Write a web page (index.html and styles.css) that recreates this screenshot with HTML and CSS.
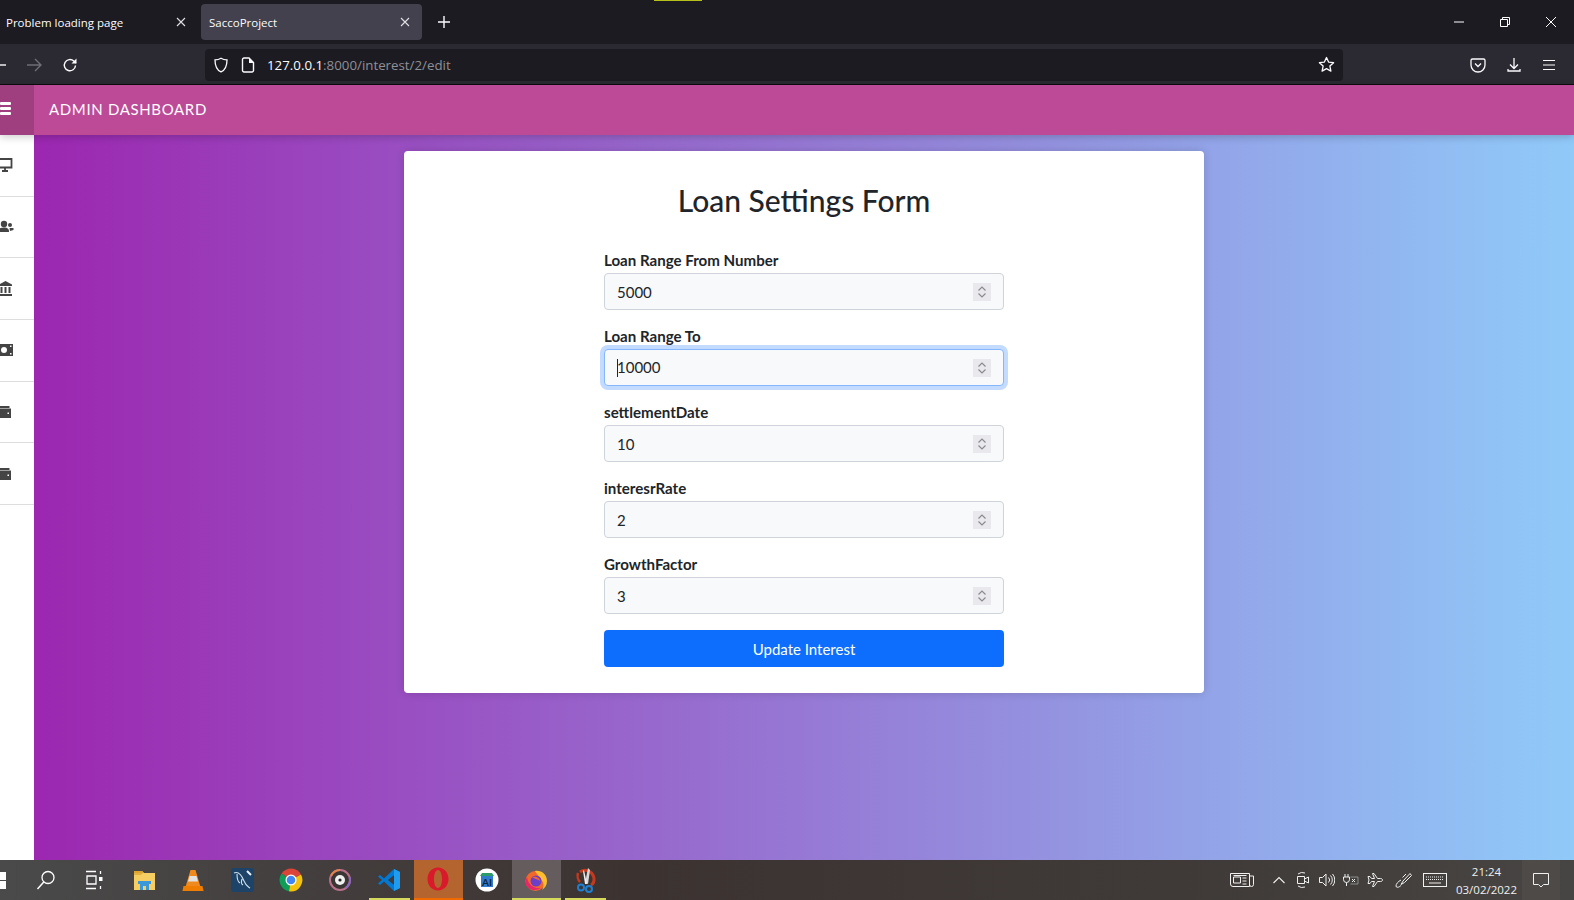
FILE: index.html
```html
<!DOCTYPE html>
<html lang="en">
<head>
  <meta charset="UTF-8" />
  <title>SaccoProject</title>
  <link rel="stylesheet" href="styles.css">
</head>
<body>
  <div class="tabstrip">
    <div class="sync-mark"></div>
    <div class="tab"><span class="tab-title">Problem loading page</span><svg width="10" height="10" viewBox="0 0 10 10"><path d="M1 1l8 8M9 1L1 9" stroke="#e0e0e6" stroke-width="1.1"/></svg></div>
    <div class="tab tab-active"><span class="tab-title">SaccoProject</span><svg width="10" height="10" viewBox="0 0 10 10"><path d="M1 1l8 8M9 1L1 9" stroke="#e0e0e6" stroke-width="1.1"/></svg></div>
    <svg class="new-tab" width="14" height="14" viewBox="0 0 14 14"><path d="M7 1v12M1 7h12" stroke="#fbfbfe" stroke-width="1.4"/></svg>
    <div class="win-btns">
      <svg width="12" height="12" viewBox="0 0 12 12"><path d="M1 6h10" stroke="#fff"/></svg>
      <svg width="12" height="12" viewBox="0 0 12 12"><path d="M1.500 3.500h7v7h-7zM3.500 3.500v-2h7v7h-2" fill="none" stroke="#fff"/></svg>
      <svg width="12" height="12" viewBox="0 0 12 12"><path d="M1 1l10 10M11 1L1 11" stroke="#fff"/></svg>
    </div>
  </div>

  <div class="toolbar">
    <div class="nav-btns">
      <svg width="6" height="16" viewBox="0 0 6 16"><path d="M0 8h6" stroke="#fbfbfe" stroke-width="1.4"/></svg>
      <svg width="16" height="16" viewBox="0 0 16 16"><path d="M1 8h14M9 2l6 6-6 6" fill="none" stroke="#6f6e76" stroke-width="1.4"/></svg>
      <svg width="16" height="16" viewBox="0 0 16 16"><path d="M13.500 8.500a5.600 5.600 0 1 1-1.700-4.400L14 6" fill="none" stroke="#fbfbfe" stroke-width="1.4"/><path d="M14.500 1.500v5h-5z" fill="#fbfbfe"/></svg>
    </div>
    <div class="urlbar">
      <svg width="16" height="16" viewBox="0 0 16 16"><path d="M8 1.200c2 1.200 4 1.600 6 1.700 0 6-1.600 10-6 12-4.400-2-6-6-6-12 2-.1 4-.5 6-1.700z" fill="none" stroke="#fbfbfe" stroke-width="1.300"/></svg>
      <svg width="14" height="16" viewBox="0 0 14 16"><path d="M2.500 1H8l4.500 4.500v8a1.500 1.500 0 0 1-1.500 1.500H3a1.500 1.500 0 0 1-1.500-1.500V2.500A1.500 1.500 0 0 1 3 1z" fill="none" stroke="#fbfbfe" stroke-width="1.400"/><path d="M8 1v5h5z" fill="#fbfbfe"/></svg>
      <span class="url"><span class="url-host">127.0.0.1</span>:8000/interest/2/edit</span>
      <svg class="star" width="17" height="17" viewBox="0 0 17 17"><path d="M8.500 1.500l2.100 4.600 5 .6-3.700 3.400 1 5-4.400-2.500-4.400 2.500 1-5L1.400 6.700l5-.6z" fill="none" stroke="#fbfbfe" stroke-width="1.300" stroke-linejoin="round"/></svg>
    </div>
    <div class="tool-btns">
      <svg width="16" height="16" viewBox="0 0 16 16"><path d="M2.500 2h11A1.500 1.500 0 0 1 15 3.500V8a7 7 0 0 1-14 0V3.500A1.500 1.500 0 0 1 2.500 2z" fill="none" stroke="#fbfbfe" stroke-width="1.300"/><path d="M5 6.500l3 3 3-3" fill="none" stroke="#fbfbfe" stroke-width="1.300"/></svg>
      <svg width="16" height="16" viewBox="0 0 16 16"><path d="M8 1v10M4 7.500L8 11.500l4-4M2 12v2h12v-2" fill="none" stroke="#fbfbfe" stroke-width="1.300"/></svg>
      <svg width="14" height="14" viewBox="0 0 14 14"><path d="M1 2.500h12M1 7h12M1 11.500h12" stroke="#fbfbfe" stroke-width="1.200"/></svg>
    </div>
  </div>

  <div class="page">
    <header class="topbar">
      <div class="menu-toggle"><span></span><span></span><span></span></div>
      <div class="brand">ADMIN DASHBOARD</div>
    </header>
    <div class="page-body">
      <nav class="sidebar">
        <a class="side-item">
          <svg width="14" height="16" viewBox="0 0 14 16"><path d="M-1 2h12.500v8.500H-1zM2 14h6M5 10.500V14" fill="none" stroke="#444" stroke-width="1.800"/></svg>
        </a>
        <a class="side-item">
          <svg width="14" height="16" viewBox="0 0 14 16"><circle cx="4" cy="5" r="3.200" fill="#444"/><path d="M-2 13c0-3 2-4.500 6-4.500s5 1.500 5 4.500z" fill="#444"/><circle cx="10" cy="6" r="2" fill="#444"/><path d="M9.500 9h4v2l-3.500 1z" fill="#444"/></svg>
        </a>
        <a class="side-item">
          <svg width="14" height="16" viewBox="0 0 14 16"><path d="M5.500 0l6.500 3.500V5H-1V3.500z" fill="#444"/><path d="M.5 6h2v6h-2zM4.500 6h2v6h-2zM8.500 6h2v6h-2zM-1 13h13v2H-1z" fill="#444"/></svg>
        </a>
        <a class="side-item">
          <svg width="14" height="16" viewBox="0 0 14 16"><path d="M0 2h13V14H0z" fill="#444"/><circle cx="4" cy="8" r="3" fill="#fff"/><rect x="10" y="3.500" width="1.500" height="1.500" fill="#fff"/><rect x="10" y="11" width="1.500" height="1.500" fill="#fff"/></svg>
        </a>
        <a class="side-item">
          <svg width="14" height="16" viewBox="0 0 14 16"><path d="M0 2h9.500v2H0z" fill="#444"/><path d="M0 4.500h11v9.500H0z" fill="#444"/><rect x="7.500" y="8.500" width="1.500" height="1.500" fill="#fff"/></svg>
        </a>
        <a class="side-item">
          <svg width="14" height="16" viewBox="0 0 14 16"><path d="M0 2h9.500v2H0z" fill="#444"/><path d="M0 4.500h11v9.500H0z" fill="#444"/><rect x="7.500" y="8.500" width="1.500" height="1.500" fill="#fff"/></svg>
        </a>
      </nav>
      <main class="content">
        <section class="card">
          <h1 class="card-title">Loan Settings Form</h1>
          <form class="loan-form">
            <div class="field">
              <label>Loan Range From Number</label>
              <div class="num-input"><span>5000</span><i class="spin"><svg width="10" height="16" viewBox="0 0 10 16"><path d="M1.500 6.500L5 3l3.500 3.500M1.500 9.500L5 13l3.500-3.500" fill="none" stroke="#8a8a8f" stroke-width="1.200"/></svg></i></div>
            </div>
            <div class="field">
              <label>Loan Range To</label>
              <div class="num-input focused"><span><b class="caret"></b>10000</span><i class="spin"><svg width="10" height="16" viewBox="0 0 10 16"><path d="M1.500 6.500L5 3l3.500 3.500M1.500 9.500L5 13l3.500-3.500" fill="none" stroke="#8a8a8f" stroke-width="1.200"/></svg></i></div>
            </div>
            <div class="field">
              <label>settlementDate</label>
              <div class="num-input"><span>10</span><i class="spin"><svg width="10" height="16" viewBox="0 0 10 16"><path d="M1.500 6.500L5 3l3.500 3.500M1.500 9.500L5 13l3.500-3.500" fill="none" stroke="#8a8a8f" stroke-width="1.200"/></svg></i></div>
            </div>
            <div class="field">
              <label>interesrRate</label>
              <div class="num-input"><span>2</span><i class="spin"><svg width="10" height="16" viewBox="0 0 10 16"><path d="M1.500 6.500L5 3l3.500 3.500M1.500 9.500L5 13l3.500-3.500" fill="none" stroke="#8a8a8f" stroke-width="1.200"/></svg></i></div>
            </div>
            <div class="field">
              <label>GrowthFactor</label>
              <div class="num-input"><span>3</span><i class="spin"><svg width="10" height="16" viewBox="0 0 10 16"><path d="M1.500 6.500L5 3l3.500 3.500M1.500 9.500L5 13l3.500-3.500" fill="none" stroke="#8a8a8f" stroke-width="1.200"/></svg></i></div>
            </div>
            <button class="submit" type="button">Update Interest</button>
          </form>
        </section>
      </main>
    </div>
  </div>

  <footer class="taskbar">
    <div class="start"><span></span><span></span></div>
    <!-- search -->
    <span class="task-slot"><svg width="22" height="22" viewBox="0 0 22 22"><circle cx="13" cy="8.500" r="6" fill="none" stroke="#fff" stroke-width="1.300"/><path d="M8.800 13L2.500 20" stroke="#fff" stroke-width="1.500"/></svg></span>
    <!-- task view -->
    <span class="task-slot"><svg width="22" height="22" viewBox="0 0 22 22"><path d="M2 2.500h10M2 19.500h10M3 7h9v8H3zM16.500 2v3M16.500 17v3" fill="none" stroke="#fff" stroke-width="1.300"/><rect x="15" y="8" width="3.500" height="4" fill="#fff"/></svg></span>
    <!-- folder -->
    <span class="task-slot"><svg width="24" height="22" viewBox="0 0 24 22"><path d="M2 2h8l2 2h11v17H2z" fill="#f5cf62"/><path d="M2 2h8l2 2H2z" fill="#dca530"/><path d="M2 4h9l-2 2H2z" fill="#e3b23f"/><path d="M8 12h9v9h-3v-4h-3v4H8z" fill="#3a97d8"/><path d="M6 12h13v3H6z" fill="#3a97d8"/></svg></span>
    <!-- vlc -->
    <span class="task-slot"><svg width="24" height="24" viewBox="0 0 24 24"><path d="M9.500 2h5l5 17h-15z" fill="#f08a1c"/><path d="M8.500 8h7l1.500 5.500H7z" fill="#e2e2e2"/><path d="M2.500 18h19l1 5h-21z" fill="#ef7d00"/></svg></span>
    <!-- mysql workbench -->
    <span class="task-slot"><svg width="24" height="24" viewBox="0 0 24 24"><rect x="1" y="0" width="23" height="24" rx="3" fill="#1d4468"/><path d="M4 5c5-2 8 3 10 8s3 5 6 7M7 6c0 5 1 8 3 9M12 11c-1 3-1 5 1 6" fill="none" stroke="#cfe0ec" stroke-width="1.100"/><path d="M17 3l4 4" stroke="#e8f0f6" stroke-width="2"/></svg></span>
    <!-- chrome -->
    <span class="task-slot"><svg width="24" height="24" viewBox="0 0 24 24"><path d="M12 12L22 6.500A11.500 11.500 0 0 0 2.600 5.400z" fill="#db4437"/><path d="M12 12L2.600 5.400A11.500 11.500 0 0 0 10 23.300z" fill="#0f9d58"/><path d="M12 12l-2 11.300A11.500 11.500 0 0 0 22 6.500z" fill="#f4c20d"/><circle cx="12" cy="12" r="5.500" fill="#fff"/><circle cx="12" cy="12" r="4.300" fill="#4285f4"/></svg></span>
    <!-- groove -->
    <span class="task-slot"><svg width="24" height="24" viewBox="0 0 24 24"><circle cx="12" cy="12" r="10" fill="#3a3634" stroke="#b8708a" stroke-width="2"/><path d="M12 2a10 10 0 0 0-9 6" fill="none" stroke="#e0824a" stroke-width="2"/><path d="M21.500 9a10 10 0 0 1-4 11" fill="none" stroke="#8b66c4" stroke-width="2"/><circle cx="12" cy="12" r="5" fill="#f0f0f0"/><circle cx="12" cy="12" r="1.600" fill="#222"/></svg></span>
    <!-- vs code -->
    <span class="task-slot task-open"><svg width="24" height="24" viewBox="0 0 24 24"><path d="M17 1l6 3v16l-6 3L7 13.500 3 17l-2-1.500L5 12 1 8.500 3 7l4 3.500z" fill="#0078d4"/><path d="M17 1l6 3v16l-6 3z" fill="#1f9cf0"/><path d="M17 7v10l-6-5z" fill="#3f3a39"/></svg></span>
    <!-- opera -->
    <span class="task-slot task-opera"><svg width="24" height="26" viewBox="0 0 24 26"><path d="M12 1.500c6 0 10.500 5 10.500 11.500S18 24.500 12 24.500 1.500 19.500 1.500 13 6 1.500 12 1.500zM12 4c-2.500 0-4 4-4 9s1.500 9 4 9 4-4 4-9-1.500-9-4-9z" fill="#d81a2a" fill-rule="evenodd"/></svg></span>
    <!-- ai app -->
    <span class="task-slot"><svg width="24" height="24" viewBox="0 0 24 24"><circle cx="12" cy="12" r="11.500" fill="#fff"/><path d="M7 5h10l2 3H5z" fill="#2e9c6a"/><path d="M6 8h12v11H6z" fill="#2f7bd0"/><text class="ai-label" x="12" y="17.500" text-anchor="middle">AI</text></svg></span>
    <!-- firefox -->
    <span class="task-slot task-active"><svg width="24" height="24" viewBox="0 0 24 24"><circle cx="11.500" cy="13" r="10" fill="#f2682a"/><path d="M11 3c6-1 12 3 12 10 0 4-2 7-5 9 2-3 2-7 0-9-1-3-4-5-7-10z" fill="#ffbd2e"/><path d="M3 9c1 7 6 12 14 11-4 3-12 3-15-3-1-3 0-6 1-8z" fill="#e6286b"/><circle cx="12" cy="13" r="5.500" fill="#6b3fc9"/><path d="M8 9c4-1 8 1 8 4-3-2-5-2-8-4z" fill="#f2682a"/></svg></span>
    <!-- snip tool -->
    <span class="task-slot task-open"><svg width="24" height="26" viewBox="0 0 24 26"><path d="M6 5a9 9 0 0 1 14 8c0 2-1 4-3 5" fill="none" stroke="#c43a1e" stroke-width="3"/><path d="M4 6c-1 3 0 7 2 9" fill="none" stroke="#c43a1e" stroke-width="2.500"/><path d="M14 1l2 2-2 14-3-1z" fill="#d8d8d8"/><path d="M10 3l3 14h-2L9 4z" fill="#f0f0f0"/><circle cx="7" cy="20.500" r="3" fill="none" stroke="#1f7fd0" stroke-width="2"/><circle cx="15" cy="22" r="3" fill="none" stroke="#1f7fd0" stroke-width="2"/></svg></span>

    <div class="tray">
      <span class="tray-news"><svg width="24" height="16" viewBox="0 0 24 16"><path d="M.5 1.500h19v13H3A2.500 2.500 0 0 1 .5 12zM19.500 4h4v8.500a2 2 0 0 1-4 0" fill="none" stroke="#f0f0f0"/><path d="M3.500 5h7v6h-7zM3.500 3.500h13M12.500 6h4M12.500 9h4M12.500 12h4" fill="none" stroke="#f0f0f0"/></svg></span>
      <span class="tray-slot"><svg width="14" height="14" viewBox="0 0 14 14"><path d="M1.500 10L7 4.500 12.500 10" fill="none" stroke="#f0f0f0" stroke-width="1.100"/></svg></span>
      <span class="tray-slot"><svg width="14" height="18" viewBox="0 0 14 18"><path d="M2 3a7 7 0 0 1 7-1M9 16a7 7 0 0 1-7-1" fill="none" stroke="#f0f0f0"/><path d="M1.500 5.500h7v7h-7zM8.500 8l4-2v6l-4-2" fill="none" stroke="#f0f0f0"/></svg></span>
      <span class="tray-slot"><svg width="16" height="16" viewBox="0 0 16 16"><path d="M.5 5.500h3L7 2v12l-3.500-3.500h-3zM9.500 5.500a3.500 3.500 0 0 1 0 5M11.500 3.500a6.500 6.500 0 0 1 0 9M13.500 2a9 9 0 0 1 0 12" fill="none" stroke="#f0f0f0"/></svg></span>
      <span class="tray-slot"><svg width="16" height="14" viewBox="0 0 16 14"><path d="M2 1v3M5 1v3M.5 4h6v2.500a3 3 0 0 1-6 0zM3.500 9.500V13" fill="none" stroke="#f0f0f0"/><path d="M7.500 4h7.500v7H7.500" fill="none" stroke="#8e8e8e"/><path d="M9 6l3 3M12 6L9 9" stroke="#f0f0f0"/></svg></span>
      <span class="tray-slot"><svg width="16" height="16" viewBox="0 0 16 16"><path d="M15.500 8c0-1-1-1.500-2-1.500h-3L7 1.500H5.500L7.500 6.500h-3L3 4.500H1L2 8l-1 3.500h2l1.500-2h3l-2 5H7l3.500-5h3c1 0 2-.5 2-1.500z" fill="none" stroke="#f0f0f0"/></svg></span>
      <span class="tray-pen"><svg width="17" height="17" viewBox="0 0 17 17"><path d="M15 1.500L8 9 6 12.500l3.500-2 7-7zM11 2L7.500 5.500M6 8c-3 1.500-5 4-5 6 0 2 3 1.500 5-.5" fill="none" stroke="#f0f0f0"/></svg></span>
      <span class="tray-pen"><svg width="24" height="14" viewBox="0 0 24 14"><rect x=".5" y=".5" width="23" height="13" fill="none" stroke="#f0f0f0"/><path d="M3 4h18M3 6.500h18" stroke="#f0f0f0" stroke-dasharray="1 1"/><path d="M6 10h12" stroke="#f0f0f0"/></svg></span>
      <div class="clock"><span>21:24</span><span>03/02/2022</span></div>
      <span class="notify"><svg width="16" height="16" viewBox="0 0 16 16"><path d="M.5 1.500h15v11h-5L8 15l-2.500-2.500h-5z" fill="none" stroke="#f0f0f0"/></svg></span>
    </div>
  </footer>
</body>
</html>
```

FILE: styles.css
```css
* { box-sizing: border-box; }
html, body { margin: 0; height: 100%; overflow: hidden; }
body { width: 1574px; height: 900px; display: flex; flex-direction: column; font-family: Lato, sans-serif; color: #212529; background: #fff; }

.tabstrip { position: relative; height: 44px; background: #1c1b22; display: flex; align-items: flex-start; padding-top: 4px; color: #fbfbfe; font-family: "Open Sans", sans-serif; font-size: 11.500px; }
.sync-mark { position: absolute; left: 654px; top: 0; width: 48px; height: 1px; background: #b5c018; }
.tab { width: 201px; height: 36px; padding: 0 15px 0 6px; display: flex; align-items: center; justify-content: space-between; border-radius: 4px; }
.tab-active { width: 221px; background: #42414d; padding: 0 12px 0 8px; }
.new-tab { margin: 11px 0 0 15px; }
.win-btns { margin-left: auto; display: flex; gap: 34px; padding: 12px 17px 0 0; }

.toolbar { height: 41px; background: #2b2a33; border-bottom: 1px solid #0c0c0d; padding-top: 1px; display: flex; align-items: center; }
.nav-btns { display: flex; gap: 20px; width: 205px; }
.urlbar { width: 1138px; height: 32px; background: #1c1b22; border-radius: 4px; display: flex; align-items: center; gap: 12px; padding: 0 8px; }
.url { font-family: "Open Sans", sans-serif; font-size: 13.300px; color: #8f8f96; }
.url-host { color: #fbfbfe; }
.star { margin-left: auto; }
.tool-btns { display: flex; align-items: center; gap: 20px; margin-left: 127px; }

.page { flex: 1; display: flex; flex-direction: column; min-height: 0; }
.topbar { position: relative; height: 50px; background: #bc4a97; display: flex; align-items: center; color: #fff; box-shadow: 0 2px 8px rgba(0,0,0,.2); }
.menu-toggle { width: 34px; height: 50px; background: #a03f80; display: flex; flex-direction: column; gap: 2px; padding-top: 17px; }
.menu-toggle span { display: block; width: 11px; height: 3px; background: #fff; border-radius: 1px; }
.brand { padding-left: 15px; padding-bottom: 2px; font-size: 15px; letter-spacing: .65px; }

.page-body { flex: 1; display: flex; min-height: 0; }
.sidebar { width: 34px; background: #fff; display: flex; flex-direction: column; }
.side-item { height: 61.700px; border-bottom: 1px solid #ddd; display: flex; align-items: center; }

.content { flex: 1; background: linear-gradient(to right, #9c27b0, #90caf9); padding: 16px 370px 0; }
.card { width: 800px; background: #fff; border-radius: 4px; padding: 30px 200px 26px; box-shadow: 0 0 10px rgba(0,0,0,.15); }
.card-title { margin: 0 0 30px; font-size: 30px; font-weight: 500; line-height: 38px; text-align: center; white-space: nowrap; }

.field { margin-bottom: 15px; }
.field label { display: block; font-size: 15.100px; font-weight: 700; line-height: 22px; height: 22px; white-space: nowrap; }
.num-input { height: 37px; margin-top: 2px; background: #f8f9fa; border: 1px solid #ced4da; border-radius: 4px; padding: 0 12px; display: flex; align-items: center; justify-content: space-between; font-size: 15px; }
.num-input.focused { border-color: #86b7fe; box-shadow: 0 0 0 4px rgba(13,110,253,.25); }
.caret { display: inline-block; width: 1px; height: 18px; background: #212529; vertical-align: -4px; margin-right: -1px; }
.spin { width: 18px; height: 18px; background: #e9e9ed; display: flex; align-items: center; justify-content: center; }
.submit { display: block; width: 100%; height: 37px; margin-top: 16px; background: #0d6efd; color: #fff; border: none; border-radius: 4px; font: 15px Lato, sans-serif; }

.taskbar { height: 40px; background: linear-gradient(to right, #4a4a4a, #3c3331 40%, #3f3a38 75%, #474543); display: flex; align-items: center; }
.start { width: 21px; display: flex; flex-direction: column; gap: 1px; }
.start span { display: block; width: 6px; height: 8px; background: #fff; }
.task-slot { position: relative; width: 49.100px; height: 40px; display: flex; align-items: center; justify-content: center; }
.task-open::after, .task-active::after { content: ""; position: absolute; left: 4px; right: 4px; bottom: 0; height: 2px; background: #d6da5c; }
.task-opera { background: #b4642f; border-bottom: 2px solid #f06a00; }
.task-active { background: #655d5d; }
.task-active::after { left: 0; right: 0; }
.ai-label { font: 700 10px Lato, sans-serif; fill: #0c2740; }

.tray { margin-left: auto; display: flex; align-items: center; height: 40px; padding-right: 14px; color: #f0f0f0; }
.tray-news { width: 43px; padding-left: 6px; display: flex; align-items: center; }
.tray-slot { width: 24px; display: flex; align-items: center; justify-content: center; }
.tray-pen { width: 32px; display: flex; align-items: center; justify-content: center; }
.clock { width: 71px; display: flex; flex-direction: column; align-items: center; gap: 3px; font: 11.500px/15px "Open Sans", sans-serif; }
.notify { width: 38px; height: 40px; background: #4d4a48; display: flex; align-items: center; justify-content: center; }
```
